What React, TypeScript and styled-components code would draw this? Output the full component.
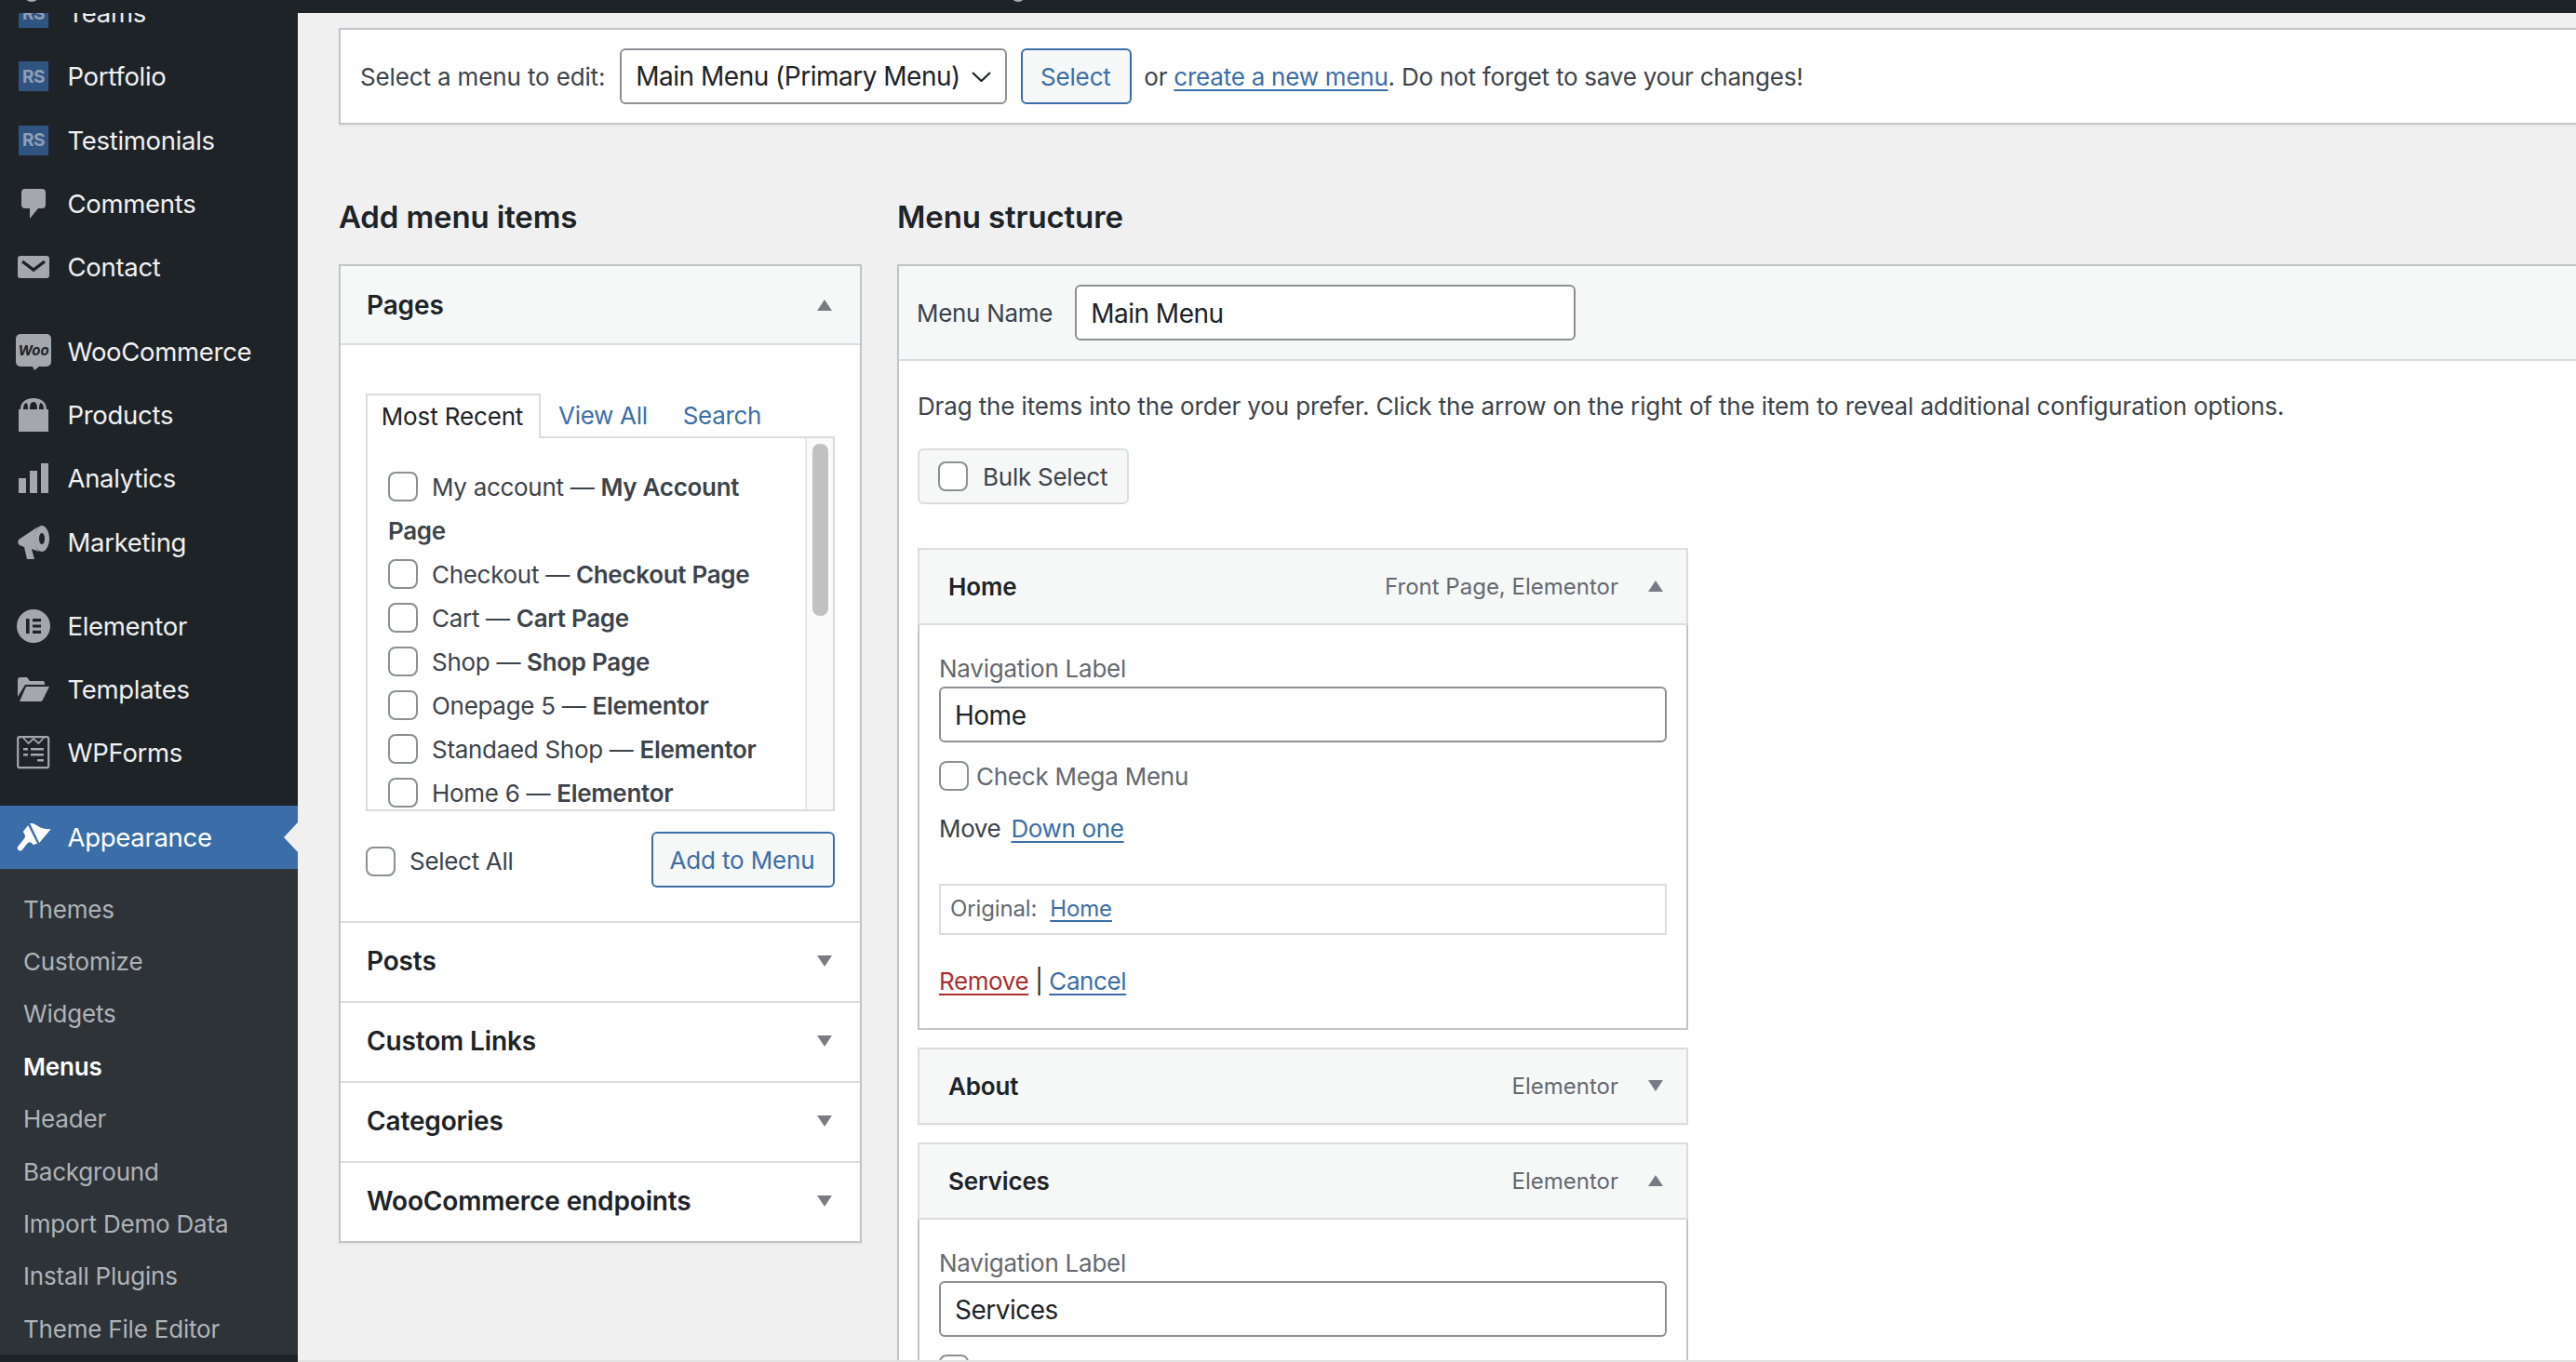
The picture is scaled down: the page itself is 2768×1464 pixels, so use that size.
import React, { FC, ReactNode } from 'react';
import styled, { createGlobalStyle } from 'styled-components';

const GlobalStyle = createGlobalStyle`
    * {
        box-sizing: border-box;
    }
    html, body {
        margin: 0;
        padding: 0;
        width: 2768px;
        height: 1464px;
        overflow: hidden;
        background: #f0f0f0;
        font-family: Inter, "Liberation Sans", sans-serif;
    }
`;

const Page = styled.div`
    width: 2768px;
    height: 1464px;
    display: flex;
    flex-direction: column;
    overflow: hidden;
`;

const TopBar = styled.div`
    flex: 0 0 14px;
    background: #1e2328;
    position: relative;
    z-index: 2;
    overflow: hidden;
`;

const TopArc = styled.span<{ $left: number; $size: number }>`
    position: absolute;
    left: ${(p) => p.$left}px;
    bottom: 12px;
    width: ${(p) => p.$size}px;
    height: ${(p) => p.$size}px;
    border-radius: 50%;
    background: #a7aaad;
`;

const Body = styled.div`
    flex: 1;
    display: flex;
    min-height: 0;
`;

const Sidebar = styled.nav`
    flex: 0 0 320px;
    background: #1e2328;
    overflow: hidden;
`;

const SideList = styled.div`
    margin-top: -34px;
    display: flex;
    flex-direction: column;
`;

const SideRow = styled.div<{ $active?: boolean }>`
    position: relative;
    flex: 0 0 68.3px;
    display: flex;
    align-items: center;
    padding-left: 16px;
    gap: 16.500px;
    font-size: 27.500px;
    letter-spacing: -0.3px;
    color: ${(p) => (p.$active ? '#ffffff' : '#f0f0f1')};
    background: ${(p) => (p.$active ? '#3b6ea8' : 'transparent')};

    ${(p) =>
        p.$active &&
        `&::after {
            content: '';
            position: absolute;
            right: 0;
            top: 18px;
            border-style: solid;
            border-width: 16px 15px 16px 0;
            border-color: transparent #f0f0f0 transparent transparent;
        }`}
`;

const SideGap = styled.div`
    flex: 0 0 22px;
`;

const IconSlot = styled.span`
    flex: 0 0 40px;
    height: 40px;
    display: flex;
    align-items: center;
    justify-content: center;
`;

const RsIcon = styled.span`
    width: 32px;
    height: 32px;
    background: #2f5482;
    color: #8f9fb5;
    font-size: 19px;
    font-weight: 700;
    letter-spacing: -0.5px;
    display: flex;
    align-items: center;
    justify-content: center;
`;

const WooIcon = styled.span`
    position: relative;
    width: 38px;
    height: 35px;
    margin-top: -3px;
    background: #a4a7ac;
    border-radius: 5px;
    color: #1e2328;
    font-size: 15px;
    font-weight: 700;
    font-style: italic;
    letter-spacing: 0;
    display: flex;
    align-items: center;
    justify-content: center;

    &::after {
        content: '';
        position: absolute;
        left: 18px;
        bottom: -4px;
        border-style: solid;
        border-width: 4px 5px 0 2px;
        border-color: #a4a7ac transparent transparent transparent;
    }
`;

const SubList = styled.div`
    background: #2e3338;
    padding: 15px 0 0;
    flex: 1;
`;

const SubRow = styled.div<{ $current?: boolean }>`
    height: 56.4px;
    display: flex;
    align-items: center;
    padding-left: 25px;
    font-size: 26px;
    letter-spacing: -0.2px;
    color: ${(p) => (p.$current ? '#ffffff' : '#aeb3b8')};
    font-weight: ${(p) => (p.$current ? 600 : 400)};
`;

const Main = styled.main`
    position: relative;
    flex: 1;
    min-width: 0;
    padding: 16px 0 0 44px;
    overflow: hidden;
    letter-spacing: -0.14px;

    &::after {
        content: '';
        position: absolute;
        left: 0;
        right: 0;
        bottom: 0;
        height: 2px;
        background: #e2e2e3;
    }
`;

const MenuBar = styled.div`
    height: 104px;
    background: #ffffff;
    border: 2px solid #c3c4c7;
    border-right: 0;
    display: flex;
    align-items: center;
    padding-left: 21px;
    font-size: 26px;
    color: #3c434a;
    box-shadow: 0 2px 2px rgba(0, 0, 0, 0.03);
`;

const BarLabel = styled.span`
    margin-right: 16px;
`;

const SelectWrap = styled.span`
    position: relative;
    width: 416px;
    height: 60px;
    margin-right: 15px;
`;

const MenuSelect = styled.select`
    appearance: none;
    width: 100%;
    height: 100%;
    border: 2px solid #8c8f94;
    border-radius: 6px;
    background: #ffffff;
    padding: 0 0 0 15px;
    font: inherit;
    font-size: 28px;
    letter-spacing: -0.5px;
    color: #1d2327;
`;

const SelectChevron = styled.svg`
    position: absolute;
    right: 17px;
    top: 25px;
    width: 21px;
    height: 11px;
`;

const OutlineButton = styled.button<{ $width: number }>`
    width: ${(p) => p.$width}px;
    height: 60px;
    flex: none;
    border: 2px solid #3b6ea8;
    border-radius: 6px;
    background: #f6f7f7;
    color: #3b6ea8;
    font: inherit;
    font-size: 26px;
    letter-spacing: -0.14px;
    padding: 0 2px 0 0;
`;

const BarNote = styled.span`
    margin-left: 13px;
    letter-spacing: -0.23px;
`;

const TextLink = styled.a<{ $danger?: boolean }>`
    color: ${(p) => (p.$danger ? '#ab2f2e' : '#3b6ea8')};
    text-decoration: underline;
    text-underline-offset: 4px;
    text-decoration-thickness: 2px;
`;

const Columns = styled.div`
    display: flex;
    margin-top: 74px;
    gap: 38px;
`;

const LeftColumn = styled.section`
    flex: 0 0 562px;
`;

const RightColumn = styled.section`
    flex: 1;
    min-width: 0;
`;

const Heading = styled.h2`
    margin: 0 0 26px;
    height: 50px;
    line-height: 50px;
    font-size: 33px;
    font-weight: 600;
    color: #1d2327;
`;

const Panel = styled.div`
    background: #ffffff;
    border: 2px solid #c3c4c7;
    box-shadow: 0 2px 2px rgba(0, 0, 0, 0.04);
`;

const AccordionHead = styled.div<{ $open?: boolean }>`
    height: ${(p) => (p.$open ? '85px' : '86px')};
    display: flex;
    align-items: center;
    justify-content: space-between;
    padding: 0 30px ${(p) => (p.$open ? '0' : '2px')} 28px;
    font-size: 28px;
    font-weight: 600;
    color: #1d2327;
    background: ${(p) => (p.$open ? '#f6f7f7' : '#ffffff')};
    border-${(p) => (p.$open ? 'bottom' : 'top')}: 2px solid #dcdcde;
`;

const Caret = styled.span<{ $up?: boolean }>`
    width: 0;
    height: 0;
    flex: none;
    border-left: 8px solid transparent;
    border-right: 8px solid transparent;
    ${(p) => (p.$up ? 'border-bottom' : 'border-top')}: 12px solid #787c82;
`;

const AccordionBody = styled.div`
    padding: 52px 27px 36px;
`;

const Tabs = styled.div`
    display: flex;
    align-items: stretch;
    height: 48px;
    font-size: 26px;
`;

const ActiveTab = styled.div`
    width: 188px;
    border: 2px solid #dcdcde;
    border-bottom: 0;
    background: #ffffff;
    display: flex;
    align-items: center;
    justify-content: center;
    padding: 0 2px 2px 0;
    color: #1d2327;
    position: relative;
    z-index: 1;
`;

const TabLink = styled.a<{ $gap: number }>`
    margin-left: ${(p) => p.$gap}px;
    display: flex;
    align-items: center;
    padding-bottom: 2px;
    color: #3b6ea8;
    letter-spacing: -0.3px;
`;

const TabPanel = styled.div`
    height: 403px;
    margin-top: -2px;
    border: 2px solid #dcdcde;
    display: flex;
    overflow: hidden;
`;

const PageList = styled.div`
    flex: 1;
    min-width: 0;
    padding: 29px 30px 0 22px;
    font-size: 26px;
    line-height: 47px;
    letter-spacing: -0.3px;
    color: #3c434a;
`;

const PageItem = styled.div`
    strong {
        font-weight: 600;
    }
`;

const Scrollbar = styled.div`
    flex: 0 0 30px;
    background: #fafafa;
    border-left: 2px solid #e8e8e8;
    padding: 6px 5px 0 6px;
`;

const ScrollThumb = styled.div`
    height: 185px;
    border-radius: 8px;
    background: #c1c1c1;
`;

const Checkbox = styled.input.attrs({ type: 'checkbox' })`
    appearance: none;
    width: 32px;
    height: 32px;
    margin: 0;
    flex: none;
    border: 2px solid #8c8f94;
    border-radius: 8px;
    background: #ffffff;
`;

const ListCheckbox = styled(Checkbox)`
    vertical-align: middle;
    margin: -6px 15px 0 0;
`;

const AddRow = styled.div`
    display: flex;
    align-items: center;
    justify-content: space-between;
    margin-top: 22px;
    font-size: 26px;
    color: #3c434a;
`;

const SelectAll = styled.label`
    display: flex;
    align-items: center;
    gap: 15px;
    margin-top: 3px;
    letter-spacing: -0.3px;
`;

const StructureHead = styled.div`
    height: 102px;
    background: #f6f7f7;
    border-bottom: 2px solid #dcdcde;
    display: flex;
    align-items: center;
    padding-left: 19px;
    font-size: 26px;
    letter-spacing: -0.3px;
    color: #3c434a;
`;

const StructurePanel = styled(Panel)`
    border-right: 0;
`;

const TextField = styled.input<{ $width?: number }>`
    width: ${(p) => (p.$width ? `${p.$width}px` : '100%')};
    height: 60px;
    display: block;
    flex: none;
    border: 2px solid #8c8f94;
    border-radius: 6px;
    background: #ffffff;
    padding: 1px 15px 0;
    font: inherit;
    font-size: 28px;
    letter-spacing: -0.5px;
    color: #1d2327;
`;

const NameField = styled(TextField)`
    margin-left: 24px;
`;

const StructureBody = styled.div`
    padding: 30px 0 0 20px;
`;

const Description = styled.p`
    margin: 0;
    height: 36px;
    line-height: 37px;
    font-size: 26px;
    color: #3c434a;
`;

const BulkButton = styled.label`
    width: 227px;
    height: 60px;
    margin-top: 28px;
    border: 2px solid #dcdcde;
    border-radius: 6px;
    background: #f6f7f7;
    display: flex;
    align-items: center;
    gap: 16px;
    padding-left: 20px;
    font-size: 26px;
    letter-spacing: -0.25px;
    color: #3c434a;
`;

const ItemList = styled.div`
    width: 828px;
    margin-top: 47px;
    display: flex;
    flex-direction: column;
    gap: 19px;
`;

const ItemHead = styled.div`
    height: 83px;
    background: #f6f7f7;
    border: 2px solid #dcdcde;
    display: flex;
    align-items: center;
    padding: 0 25px 1px 31px;
    box-shadow: 0 2px 2px rgba(0, 0, 0, 0.03);
`;

const ItemTitle = styled.span`
    flex: 1;
    font-size: 26px;
    font-weight: 600;
    color: #1d2327;
`;

const ItemType = styled.span`
    font-size: 24px;
    letter-spacing: 0;
    color: #646970;
    margin-right: 32px;
`;

const ItemBody = styled.div`
    background: #ffffff;
    border: 2px solid #c3c4c7;
    border-top: 0;
    padding: 30px 21px 33px;
    font-size: 26px;
    color: #3c434a;
`;

const FieldLabel = styled.div`
    height: 34px;
    line-height: 34px;
    margin-bottom: 2px;
    letter-spacing: -0.25px;
    color: #646970;
`;

const MegaRow = styled.label`
    display: flex;
    align-items: center;
    gap: 8px;
    margin-top: 19px;
    letter-spacing: -0.25px;
    color: #646970;
`;

const MegaText = styled.span`
    padding-top: 2px;
`;

const MoveRow = styled.div`
    display: flex;
    gap: 11px;
    height: 34px;
    line-height: 32px;
    margin-top: 25px;
    letter-spacing: -0.35px;
`;

const OriginalBox = styled.div`
    height: 55px;
    margin-top: 41px;
    border: 2px solid #dcdcde;
    display: flex;
    align-items: center;
    gap: 14px;
    padding: 0 0 2px 10px;
    font-size: 24px;
    color: #646970;
`;

const ActionRow = styled.div`
    height: 34px;
    line-height: 33px;
    margin-top: 33px;
    letter-spacing: -0.4px;
    color: #1d2327;
`;

const Svg: FC<{ w: number; h: number; children: ReactNode }> = ({ w, h, children }) => (
    <svg width={w} height={h} viewBox={`0 0 ${w} ${h}`} fill="#a4a7ac">
        {children}
    </svg>
);

const icons: Record<string, ReactNode> = {
    rs: <RsIcon>RS</RsIcon>,
    comments: (
        <Svg w={26} h={32}>
            <path d="M4 0h18a4 4 0 0 1 4 4v13a4 4 0 0 1-4 4h-4l-9 11v-11H4a4 4 0 0 1-4-4V4a4 4 0 0 1 4-4z" />
        </Svg>
    ),
    contact: (
        <Svg w={34} h={24}>
            <path d="M3 0h28a3 3 0 0 1 3 3v18a3 3 0 0 1-3 3H3a3 3 0 0 1-3-3V3a3 3 0 0 1 3-3z" />
            <path d="M5 6l12 9 12-9" fill="none" stroke="#1e2328" strokeWidth="3.4" />
        </Svg>
    ),
    woo: <WooIcon>Woo</WooIcon>,
    products: (
        <Svg w={32} h={36}>
            <path d="M2 12C2 4 8 0 16 0s14 4 14 12h-3C27 8 26 6 24 5c-1 0-2 2-2 7h-2c0-5-1-8-4-8s-4 3-4 8h-2c0-5-1-7-2-7C6 6 5 8 5 12z" />
            <path d="M0 12h32v24H0z" />
        </Svg>
    ),
    analytics: (
        <Svg w={32} h={32}>
            <path d="M0 16h8v16H0zM12 8h8v24h-8zM24 0h8v32h-8z" />
        </Svg>
    ),
    marketing: (
        <Svg w={34} h={36}>
            <path d="M1 15L22 1c-5 7-5 20 1 27L15 25l3 11h-8L7 23l-5-2c-2-1-2-4-1-6z" />
            <path
                fillRule="evenodd"
                d="M26 0c4 0 8 6 8 14s-4 14-8 14-8-6-8-14S22 0 26 0zm0 8c-2 0-3 3-3 6s1 6 3 6 3-3 3-6-1-6-3-6z"
            />
        </Svg>
    ),
    elementor: (
        <Svg w={36} h={36}>
            <circle cx="18" cy="18" r="18" />
            <path d="M10 10h3.600v16H10zM17 10h9v3.200h-9zM17 16.400h9v3.200h-9zM17 22.800h9V26h-9z" fill="#1e2328" />
        </Svg>
    ),
    templates: (
        <Svg w={34} h={26}>
            <path d="M0 3a3 3 0 0 1 3-3h7l3 4h14a2 2 0 0 1 2 2v2H8L0 21z" />
            <path d="M9 10h25l-7 14a3 3 0 0 1-2 2H2z" />
        </Svg>
    ),
    wpforms: (
        <Svg w={36} h={36}>
            <rect x="1.200" y="1.200" width="33" height="33" rx="2" fill="none" stroke="#a4a7ac" strokeWidth="2.200" />
            <path d="M7 2l5.500 6L18 3l5.500 5L29 2" fill="none" stroke="#a4a7ac" strokeWidth="1.800" />
            <path d="M7 13h5v2.400H7zM15 13h14v2.400H15zM7 19h5v2.400H7zM15 19h14v2.400H15zM22 25h7v2.400h-7z" />
        </Svg>
    ),
    appearance: (
        <svg width="37" height="31" viewBox="0 0 110 93" fill="#ffffff">
            <path d="M42 4C55 0 62 10 75 16c10 5 25 7 35 5L72 66z" />
            <path d="M36 10l30 58-14 4c-8-12-14-10-22 0L16 90C8 96-2 86 3 78l21-26c6-8 0-14-4-22z" />
        </svg>
    ),
};

type SideItem = { label: string; icon: string } | 'gap';

const sideItems: SideItem[] = [
    { label: 'Teams', icon: 'rs' },
    { label: 'Portfolio', icon: 'rs' },
    { label: 'Testimonials', icon: 'rs' },
    { label: 'Comments', icon: 'comments' },
    { label: 'Contact', icon: 'contact' },
    'gap',
    { label: 'WooCommerce', icon: 'woo' },
    { label: 'Products', icon: 'products' },
    { label: 'Analytics', icon: 'analytics' },
    { label: 'Marketing', icon: 'marketing' },
    'gap',
    { label: 'Elementor', icon: 'elementor' },
    { label: 'Templates', icon: 'templates' },
    { label: 'WPForms', icon: 'wpforms' },
    'gap',
];

const subItems = [
    'Themes',
    'Customize',
    'Widgets',
    'Menus',
    'Header',
    'Background',
    'Import Demo Data',
    'Install Plugins',
    'Theme File Editor',
];

const pageItems = [
    ['My account', 'My Account Page'],
    ['Checkout', 'Checkout Page'],
    ['Cart', 'Cart Page'],
    ['Shop', 'Shop Page'],
    ['Onepage 5', 'Elementor'],
    ['Standaed Shop', 'Elementor'],
    ['Home 6', 'Elementor'],
];

const App: FC = () => (
    <Page>
        <GlobalStyle />
        <TopBar>
            <TopArc $left={25} $size={18} />
            <TopArc $left={1086} $size={16} />
        </TopBar>
        <Body>
            <Sidebar>
                <SideList>
                    {sideItems.map((item, i) =>
                        item === 'gap' ? (
                            <SideGap key={i} />
                        ) : (
                            <SideRow key={item.label}>
                                <IconSlot>{icons[item.icon]}</IconSlot>
                                {item.label}
                            </SideRow>
                        )
                    )}
                    <SideRow $active>
                        <IconSlot>{icons.appearance}</IconSlot>
                        Appearance
                    </SideRow>
                    <SubList>
                        {subItems.map((s) => (
                            <SubRow key={s} $current={s === 'Menus'}>
                                {s}
                            </SubRow>
                        ))}
                    </SubList>
                </SideList>
            </Sidebar>
            <Main>
                <MenuBar>
                    <BarLabel>Select a menu to edit:</BarLabel>
                    <SelectWrap>
                        <MenuSelect defaultValue="main">
                            <option value="main">Main Menu (Primary Menu)</option>
                        </MenuSelect>
                        <SelectChevron viewBox="0 0 21 11" fill="none" stroke="#1d2327" strokeWidth="2.200">
                            <path d="M1 1l9.500 9L20 1" />
                        </SelectChevron>
                    </SelectWrap>
                    <OutlineButton $width={119}>Select</OutlineButton>
                    <BarNote>
                        or <TextLink>create a new menu</TextLink>. Do not forget to save your changes!
                    </BarNote>
                </MenuBar>
                <Columns>
                    <LeftColumn>
                        <Heading>Add menu items</Heading>
                        <Panel>
                            <AccordionHead $open>
                                Pages
                                <Caret $up />
                            </AccordionHead>
                            <AccordionBody>
                                <Tabs>
                                    <ActiveTab>Most Recent</ActiveTab>
                                    <TabLink $gap={19}>View All</TabLink>
                                    <TabLink $gap={38}>Search</TabLink>
                                </Tabs>
                                <TabPanel>
                                    <PageList>
                                        {pageItems.map(([name, kind]) => (
                                            <PageItem key={name}>
                                                <ListCheckbox />
                                                {name} — <strong>{kind}</strong>
                                            </PageItem>
                                        ))}
                                    </PageList>
                                    <Scrollbar>
                                        <ScrollThumb />
                                    </Scrollbar>
                                </TabPanel>
                                <AddRow>
                                    <SelectAll>
                                        <Checkbox />
                                        Select All
                                    </SelectAll>
                                    <OutlineButton $width={197}>Add to Menu</OutlineButton>
                                </AddRow>
                            </AccordionBody>
                            {['Posts', 'Custom Links', 'Categories', 'WooCommerce endpoints'].map((title) => (
                                <AccordionHead key={title}>
                                    {title}
                                    <Caret />
                                </AccordionHead>
                            ))}
                        </Panel>
                    </LeftColumn>
                    <RightColumn>
                        <Heading>Menu structure</Heading>
                        <StructurePanel>
                            <StructureHead>
                                Menu Name
                                <NameField $width={538} defaultValue="Main Menu" readOnly />
                            </StructureHead>
                            <StructureBody>
                                <Description>
                                    Drag the items into the order you prefer. Click the arrow on the right of the item
                                    to reveal additional configuration options.
                                </Description>
                                <BulkButton>
                                    <Checkbox />
                                    Bulk Select
                                </BulkButton>
                                <ItemList>
                                    <div>
                                        <ItemHead>
                                            <ItemTitle>Home</ItemTitle>
                                            <ItemType>Front Page, Elementor</ItemType>
                                            <Caret $up />
                                        </ItemHead>
                                        <ItemBody>
                                            <FieldLabel>Navigation Label</FieldLabel>
                                            <TextField defaultValue="Home" readOnly />
                                            <MegaRow>
                                                <Checkbox />
                                                <MegaText>Check Mega Menu</MegaText>
                                            </MegaRow>
                                            <MoveRow>
                                                Move <TextLink>Down one</TextLink>
                                            </MoveRow>
                                            <OriginalBox>
                                                Original: <TextLink>Home</TextLink>
                                            </OriginalBox>
                                            <ActionRow>
                                                <TextLink $danger>Remove</TextLink> | <TextLink>Cancel</TextLink>
                                            </ActionRow>
                                        </ItemBody>
                                    </div>
                                    <ItemHead>
                                        <ItemTitle>About</ItemTitle>
                                        <ItemType>Elementor</ItemType>
                                        <Caret />
                                    </ItemHead>
                                    <div>
                                        <ItemHead>
                                            <ItemTitle>Services</ItemTitle>
                                            <ItemType>Elementor</ItemType>
                                            <Caret $up />
                                        </ItemHead>
                                        <ItemBody>
                                            <FieldLabel>Navigation Label</FieldLabel>
                                            <TextField defaultValue="Services" readOnly />
                                            <MegaRow>
                                                <Checkbox />
                                            </MegaRow>
                                        </ItemBody>
                                    </div>
                                </ItemList>
                            </StructureBody>
                        </StructurePanel>
                    </RightColumn>
                </Columns>
            </Main>
        </Body>
    </Page>
);

export default App;
